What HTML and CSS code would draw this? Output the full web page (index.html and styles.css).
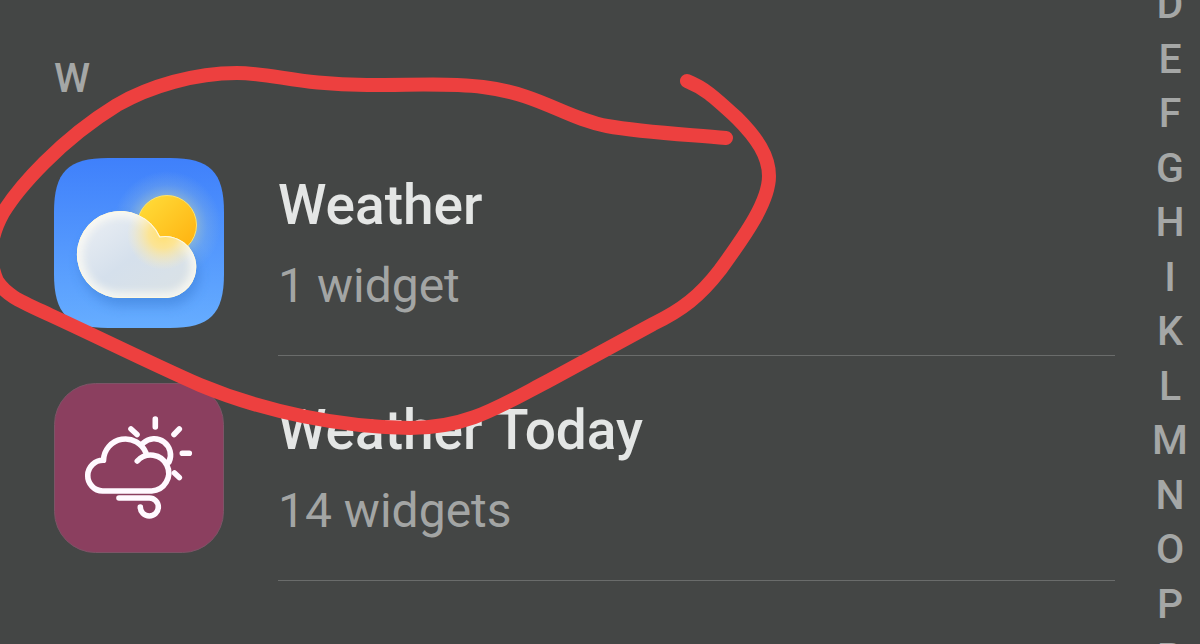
FILE: index.html
```html
<!DOCTYPE html>
<html lang="en">
<head>
  <meta charset="UTF-8">
  <meta name="viewport" content="width=device-width, initial-scale=1.0">
  <title>Widgets</title>
  <link rel="stylesheet" href="styles.css">
</head>
<body>

<div class="page">
  <main class="widget-list" id="W">
    <h2 class="section-letter">W</h2>

    <a class="app" href="#weather">
      <svg class="app-icon" viewBox="0 0 170 170" aria-hidden="true">
        <defs>
          <linearGradient id="sky" x1="0" y1="0" x2="0" y2="1">
            <stop offset="0" stop-color="#3f80fb"/>
            <stop offset="1" stop-color="#66adff"/>
          </linearGradient>
          <linearGradient id="sun" x1="0" y1="0" x2="1" y2="1">
            <stop offset="0" stop-color="#ffdf3c"/>
            <stop offset="1" stop-color="#ffae0c"/>
          </linearGradient>
          <linearGradient id="cloud" x1="0" y1="0" x2="1" y2="1">
            <stop offset="0" stop-color="#eef1f5"/>
            <stop offset="0.5" stop-color="#d5e0ec"/>
            <stop offset="1" stop-color="#dbe2e4"/>
          </linearGradient>
          <radialGradient id="glow">
            <stop offset="0.5" stop-color="#c8d8b0" stop-opacity="0.5"/>
            <stop offset="0.75" stop-color="#a8c8d0" stop-opacity="0.2"/>
            <stop offset="1" stop-color="#a8c8d0" stop-opacity="0"/>
          </radialGradient>
          <radialGradient id="shine">
            <stop offset="0" stop-color="#ffdf70"/>
            <stop offset="0.4" stop-color="#ffe48c" stop-opacity="0.9"/>
            <stop offset="1" stop-color="#fff0c0" stop-opacity="0"/>
          </radialGradient>
          <filter id="soft" x="-20%" y="-20%" width="140%" height="150%">
            <feGaussianBlur stdDeviation="6"/>
          </filter>
          <filter id="edge">
            <feGaussianBlur stdDeviation="4"/>
          </filter>
          <path id="cloud-shape" d="M66 140A43.500 43.500 0 1 1 105 78.500A31 31 0 1 1 112 140Z"/>
          <clipPath id="cloud-clip"><use href="#cloud-shape"/></clipPath>
        </defs>
        <path d="M0 54C0 14 14 0 54 0H116C156 0 170 14 170 54V116C170 156 156 170 116 170H54C14 170 0 156 0 116Z" fill="url(#sky)"/>
        <g transform="translate(1 0)">
          <circle cx="112" cy="67" r="54" fill="url(#glow)"/>
          <use href="#cloud-shape" x="3" y="8" fill="#2f6fc4" opacity="0.4" filter="url(#soft)"/>
          <circle cx="112" cy="67" r="29.500" fill="url(#sun)" stroke="#ffe46a"/>
          <g clip-path="url(#cloud-clip)">
            <use href="#cloud-shape" fill="url(#cloud)"/>
            <use href="#cloud-shape" fill="none" stroke="#fffdf4" stroke-width="11" opacity="0.8" filter="url(#edge)"/>
            <circle cx="108" cy="76" r="36" fill="url(#shine)"/>
            <use href="#cloud-shape" fill="none" stroke="#fff9df" stroke-width="2"/>
          </g>
        </g>
      </svg>
      <div class="app-text">
        <span class="app-name">Weather</span>
        <span class="app-count">1 widget</span>
      </div>
    </a>

    <a class="app" href="#weather-today">
      <svg class="app-icon" viewBox="0 0 170 170" aria-hidden="true">
        <rect x="0.500" y="0.500" width="169" height="169" rx="41" fill="#8b3f5f" stroke="#7d5467"/>
        <g fill="none" stroke="#fff9ff" stroke-width="5.600" stroke-linecap="round" stroke-linejoin="round">
          <path d="M83.300 78A18 18 0 1 1 97.700 108H48.700A15.300 15.300 0 0 1 49.500 77.300A22 22 0 0 1 92 70"/>
          <path d="M89.300 60A16.300 16.300 0 0 1 115 79"/>
          <path d="M101.300 36V44M77 46L83 51.500M125.300 46L120 51.500M128.300 70.300H135.300M120.500 90L125.300 94.500"/>
          <path d="M65 115H95.300A9 9 0 1 1 86.300 124"/>
        </g>
      </svg>
      <div class="app-text">
        <span class="app-name">Weather Today</span>
        <span class="app-count">14 widgets</span>
      </div>
    </a>
  </main>

  <nav class="letter-index" aria-label="Jump to letter">
    <a href="#D">D</a>
    <a href="#E">E</a>
    <a href="#F">F</a>
    <a href="#G">G</a>
    <a href="#H">H</a>
    <a href="#I">I</a>
    <a href="#K">K</a>
    <a href="#L">L</a>
    <a href="#M">M</a>
    <a href="#N">N</a>
    <a href="#O">O</a>
    <a href="#P">P</a>
    <a href="#R">R</a>
  </nav>

  <!-- hand-drawn circle around the first app -->
  <svg class="marker" width="800" height="460" viewBox="0 0 800 460" aria-hidden="true">
    <path d="M687 81C704 88 712 95 737 118C757 138 769 156 769 176C769 201 747 233 720 270C700 296 682 310 653 324C620 342 583 362 550 380C500 406 468 428 410 428C340 427 265 412 200 385C150 363 100 338 50 315C20 301 7 296 -3 281C-14 255 -8 233 3 213C18 188 60 140 117 105C150 86 195 73 237 73C273 73 300 85 367 85C420 85 450 83 483 87C540 94 565 118 607 126C640 132 680 134 726 138"/>
  </svg>
</div>

</body>
</html>
```
FILE: styles.css
```css
body {
  margin: 0;
  background-color: #444645;
  font-family: Roboto, 'Liberation Sans', sans-serif;
}

a {
  color: inherit;
  text-decoration: none;
}

.page {
  position: relative;
  display: flex;
  height: 100vh;
  overflow: hidden;
}

.widget-list {
  flex: 1;
  padding: 51px 25px 0 54px;
}

.section-letter {
  margin: 0 0 26px;
  font-size: 41px;
  font-weight: 500;
  line-height: 54px;
  color: #a5a7a6;
}

.app {
  display: flex;
  gap: 54px;
}

.app-icon {
  flex: none;
  width: 170px;
  height: 170px;
  padding: 27px 0 28px;
}

.app-text {
  flex: 1;
  display: flex;
  flex-direction: column;
  justify-content: center;
  padding-top: 2px;
  border-bottom: 1px solid #6a6c6b;
}

.app-name {
  font-size: 55px;
  font-weight: 500;
  line-height: 84px;
  color: #e4e6e5;
}

.app-count {
  font-size: 48px;
  line-height: 78px;
  color: #a3a5a4;
}

/* taller than the window, so the first and last letters are cut off */
.letter-index {
  display: flex;
  flex-direction: column;
  width: 60px;
  height: 110vh;
  margin-top: -23px;
}

.letter-index a {
  flex: 1;
  display: flex;
  align-items: center;
  justify-content: center;
  font-size: 41px;
  font-weight: 500;
  color: #a5a7a6;
}

.marker {
  position: absolute;
  top: 0;
  left: 0;
  pointer-events: none;
}

.marker path {
  fill: none;
  stroke: #ed403f;
  stroke-width: 14px;
  stroke-linecap: round;
}
```
